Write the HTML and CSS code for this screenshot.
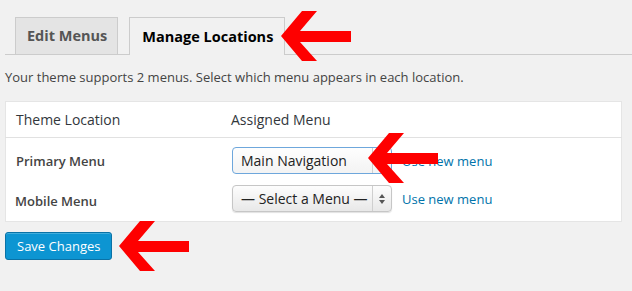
FILE: index.html
```html
<!DOCTYPE html>
<html lang="en">
<head>
    <meta charset="UTF-8">
    <title>Menus - Manage Locations</title>
    <link rel="stylesheet" href="styles.css">
</head>
<body>
    <div class="wrap">
        <!-- Abas -->
        <h2 class="nav-tab-wrapper">
            <a class="nav-tab">Edit Menus</a>
            <a class="nav-tab nav-tab-active">Manage Locations</a>
        </h2>

        <p class="description">Your theme supports 2 menus. Select which menu appears in each location.</p>

        <table class="menu-locations">
            <thead>
                <tr>
                    <th class="col-location">Theme Location</th>
                    <th>Assigned Menu</th>
                </tr>
            </thead>
            <tbody>
                <tr class="row-primary">
                    <td class="menu-location-title">Primary Menu</td>
                    <td>
                        <div class="menu-cell">
                            <div class="fake-select is-focused">
                                <span class="select-value">Main Navigation</span>
                                <span class="select-arrow">
                                    <svg width="8" height="12" viewBox="0 0 8 12"><path d="M4 1 L7 5 L1 5 Z M4 11 L7 7 L1 7 Z" fill="#555"/></svg>
                                </span>
                            </div>
                            <a class="use-new">Use new menu</a>
                        </div>
                    </td>
                </tr>
                <tr class="row-mobile">
                    <td class="menu-location-title">Mobile Menu</td>
                    <td>
                        <div class="menu-cell">
                            <div class="fake-select">
                                <span class="select-value">— Select a Menu —</span>
                                <span class="select-arrow">
                                    <svg width="8" height="12" viewBox="0 0 8 12"><path d="M4 1 L7 5 L1 5 Z M4 11 L7 7 L1 7 Z" fill="#555"/></svg>
                                </span>
                            </div>
                            <a class="use-new">Use new menu</a>
                        </div>
                    </td>
                </tr>
            </tbody>
        </table>

        <button class="button-primary">Save Changes</button>
    </div>

    <!-- Setas vermelhas por cima -->
    <svg class="red-arrow arrow-tabs" width="70" height="50" viewBox="0 0 70 50"><polygon points="0,25 21,0 36,0 19,20 70,20 70,31 19,31 36,50 21,50"/></svg>
    <svg class="red-arrow arrow-select" width="70" height="50" viewBox="0 0 70 50"><polygon points="0,25 21,0 36,0 19,20 70,20 70,31 19,31 36,50 21,50"/></svg>
    <svg class="red-arrow arrow-save" width="70" height="50" viewBox="0 0 70 50"><polygon points="0,25 21,0 36,0 19,20 70,20 70,31 19,31 36,50 21,50"/></svg>
</body>
</html>
```

FILE: styles.css
```css
/* Estilos gerais */
body {
    margin: 0;
    background-color: #f1f1f1;
    font-family: "Open Sans", "Liberation Sans", sans-serif;
    font-size: 13px;
    color: #444;
    position: relative;
    height: 291px;
    overflow: hidden;
}

.wrap {
    padding: 17px 10px 0 5px;
}

/* Abas */
.nav-tab-wrapper {
    margin: 0 -10px 0 0;
    padding: 0 0 0 10px;
    border-bottom: 1px solid #ccc;
    display: flex;
    gap: 11px;
}

.nav-tab {
    display: block;
    border: 1px solid #ccc;
    border-bottom: none;
    background-color: #e4e4e4;
    color: #555;
    font-size: 14.5px;
    font-weight: 700;
    line-height: 36px;
    padding: 0 10px 0 11px;
    text-decoration: none;
}

.nav-tab-active {
    background-color: #f1f1f1;
    color: #000;
    margin-bottom: -1px;
    line-height: 37px;
    padding: 0 11px 0 12px;
}

.description {
    margin: 13px 0 0;
    line-height: 18px;
}

/* Tabela de locais */
.menu-locations {
    width: 100%;
    margin-top: 15px;
    border-collapse: collapse;
    background-color: #fff;
    border: 1px solid #e5e5e5;
}

.menu-locations th {
    text-align: left;
    font-weight: normal;
    font-size: 14px;
    color: #32373c;
    padding: 0 10px;
    height: 35px;
    border-bottom: 1px solid #e1e1e1;
}

.menu-locations .col-location {
    width: 195px;
}

.menu-locations td {
    padding: 0 10px;
    vertical-align: middle;
}

.row-primary td {
    padding-top: 9px;
    padding-bottom: 5px;
}

.row-mobile td {
    padding-top: 6px;
    padding-bottom: 9px;
}

.menu-location-title {
    font-weight: 600;
    color: #444;
}

.row-mobile .menu-location-title {
    padding-top: 11px;
    padding-left: 9px;
}

.menu-cell {
    display: flex;
    align-items: center;
    gap: 10px;
    padding-left: 1px;
}

/* Select imitando o nativo */
.fake-select {
    width: 158px;
    height: 25px;
    border: 1px solid #c6c6c6;
    border-radius: 4px;
    background: linear-gradient(#fdfdfd, #e8e8e8);
    box-shadow: 0 1px 1px rgba(0, 0, 0, 0.12);
    display: flex;
    align-items: stretch;
    font-size: 14px;
    color: #222;
}

.fake-select.is-focused {
    border-color: #6ea7dc;
    background: linear-gradient(#fefefe, #f3f3f3);
    box-shadow: none;
}

.select-value {
    flex: 1;
    padding-left: 8px;
    line-height: 25px;
    white-space: nowrap;
}

.select-arrow {
    width: 18px;
    border-left: 1px solid #cfcfcf;
    display: flex;
    align-items: center;
    justify-content: center;
}

.use-new {
    color: #0073aa;
    text-decoration: none;
}

/* Botão salvar */
.button-primary {
    margin-top: 10px;
    height: 28px;
    padding: 0 11px;
    background-color: #0d95d2;
    border: 1px solid #0a72a6;
    border-radius: 3px;
    color: #fff;
    font-family: inherit;
    font-size: 13px;
    box-shadow: inset 0 1px 0 rgba(120, 200, 230, 0.5);
}

/* Setas vermelhas */
.red-arrow {
    position: absolute;
    fill: #fe0000;
}

.arrow-tabs {
    left: 281px;
    top: 11px;
}

.arrow-select {
    left: 368px;
    top: 133px;
}

.arrow-save {
    left: 119px;
    top: 221px;
}
```
